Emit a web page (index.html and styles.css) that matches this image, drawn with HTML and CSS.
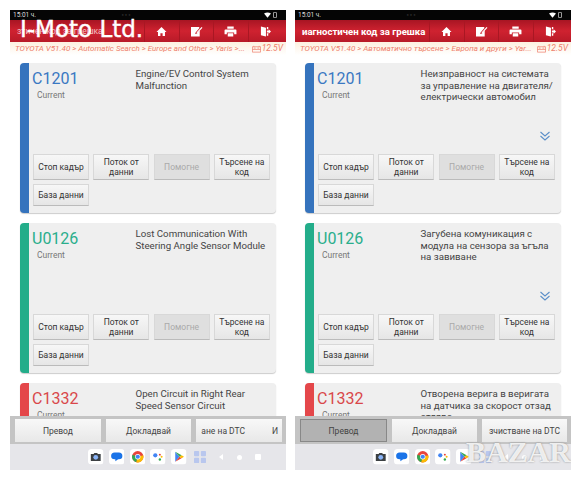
FILE: index.html
```html
<!DOCTYPE html>
<html lang="en">
<head>
  <meta charset="UTF-8">
  <title>DTC</title>
  <link rel="stylesheet" href="styles.css">
</head>
<body>

<svg class="defs" width="0" height="0">
  <symbol id="i-home" viewBox="0 0 12 12"><path d="M6 1 L11.5 6.5 H9.8 V11 H7.2 V7.8 H4.8 V11 H2.2 V6.5 H0.5 Z" fill="#fff"/></symbol>
  <symbol id="i-edit" viewBox="0 0 14 12"><path d="M1 1 H10 V2.5 L6 7 L5.5 8.8 L7.5 8.2 L10.5 5 V11.5 H1 Z" fill="#fff"/><path d="M7 7 L12.5 1 L13.5 2 L8 8 Z" fill="#fff"/></symbol>
  <symbol id="i-print" viewBox="0 0 14 12"><path d="M3.5 0.5 H10.5 V3 H3.5 Z M1.5 3.8 H12.5 Q13.5 3.8 13.5 5 V9 H11 V7 H3 V9 H0.5 V5 Q0.5 3.8 1.5 3.8 Z M4 8 H10 V11.5 H4 Z" fill="#fff"/></symbol>
  <symbol id="i-exit" viewBox="0 0 12 12"><path d="M1 0.5 L6.5 2 V11.5 L1 10 Z M7.5 1 H9 V3.5 H7.5 Z M7.5 8 H9 V10.5 H7.5 Z M7.5 5 H9.5 V3.6 L12 6 L9.5 8.4 V7 H7.5 Z" fill="#fff"/></symbol>
  <symbol id="i-chev" viewBox="0 0 12 10"><path d="M1.5 1 L6 5 L10.5 1 M1.5 5 L6 9 L10.5 5" fill="none" stroke="#5b8fc9" stroke-width="1.1"/></symbol>
  <symbol id="i-batt" viewBox="0 0 10 8"><path d="M2 0.5 V1.5 M8 0.5 V1.5 M0.5 1.5 H9.5 V7.5 H0.5 Z M0.5 4.5 H9.5 M2 3 H4 M6 3 H8" fill="none" stroke="#ee7f6c" stroke-width="0.8"/></symbol>
  <symbol id="i-wifi" viewBox="0 0 10 8"><path d="M0 2 Q5 -1.5 10 2 L5 8 Z" fill="#fff"/></symbol>
  <symbol id="i-cell" viewBox="0 0 5 8"><rect x="0.5" y="0.5" width="4" height="7" rx="0.6" fill="none" stroke="#fff" stroke-width="0.8"/></symbol>
  <symbol id="i-camera" viewBox="0 0 22 22"><rect width="22" height="22" rx="5" fill="#fff"/><path d="M4 7 H8 L9 5.5 H13 L14 7 H18 V17 H4 Z" fill="#3c4043"/><circle cx="11" cy="11.8" r="3.4" fill="#8ab4f8"/></symbol>
  <symbol id="i-msg" viewBox="0 0 22 22"><rect width="22" height="22" rx="5" fill="#fff"/><path d="M8 5 H14 Q19 5 19 10 Q19 14.5 14 14.5 H13 L9 17.5 V14.5 H8 Q3 14.5 3 10 Q3 5 8 5 Z" fill="#1a73e8"/></symbol>
  <symbol id="i-chrome" viewBox="0 0 22 22"><rect width="22" height="22" rx="5" fill="#fff"/><circle cx="11" cy="11" r="8" fill="#e8453c"/><path d="M11 11 L3.5 8 A8 8 0 0 0 9 18.8 Z" fill="#34a853"/><path d="M11 11 L19 9 A8 8 0 0 1 9 18.8 Z" fill="#fbbc04"/><circle cx="11" cy="11" r="3.8" fill="#fff"/><circle cx="11" cy="11" r="3" fill="#4285f4"/></symbol>
  <symbol id="i-assist" viewBox="0 0 22 22"><rect width="22" height="22" rx="5" fill="#fff"/><circle cx="7.5" cy="9" r="3" fill="#4285f4"/><circle cx="14" cy="8" r="1.4" fill="#ea4335"/><circle cx="16.5" cy="11" r="1.4" fill="#fbbc04"/><circle cx="14" cy="15" r="1.7" fill="#34a853"/></symbol>
  <symbol id="i-play" viewBox="0 0 22 22"><rect width="22" height="22" rx="5" fill="#fff"/><path d="M6 4 L12 11 L6 18 Z" fill="#4285f4"/><path d="M6 4 L15 9 L12 11 Z" fill="#34a853"/><path d="M6 18 L15 13 L12 11 Z" fill="#ea4335"/><path d="M15 9 L18.5 11 L15 13 L12 11 Z" fill="#fbbc04"/></symbol>
  <symbol id="i-apps" viewBox="0 0 14 14"><rect width="6" height="6" rx="1" fill="#b9c7ee"/><rect x="8" width="6" height="6" rx="1" fill="#b9c7ee"/><rect y="8" width="6" height="6" rx="1" fill="#b9c7ee"/><rect x="8" y="8" width="6" height="6" rx="1" fill="#b9c7ee"/></symbol>
</svg>

<div class="screen">
  <div class="status">
    <span>15:01 ч.</span><span class="dots">● ● ●</span>
    <span class="sys"><svg class="wifi"><use href="#i-wifi"/></svg><svg class="cell"><use href="#i-cell"/></svg></span>
  </div>
  <div class="header">
    <div class="title title-left">зтичен код за грешка</div>
    <div class="tool"><svg class="ico"><use href="#i-home"/></svg></div>
    <div class="tool"><svg class="ico"><use href="#i-edit"/></svg></div>
    <div class="tool"><svg class="ico"><use href="#i-print"/></svg></div>
    <div class="tool"><svg class="ico"><use href="#i-exit"/></svg></div>
  </div>
  <div class="crumbs">
    <span class="path">TOYOTA V51.40 &gt; Automatic Search &gt; Europe and Other &gt; Yaris &gt;...</span>
    <span class="volt"><svg class="batt"><use href="#i-batt"/></svg>12.5V</span>
  </div>
  <div class="list">
    <div class="card blue">
      <div class="card-top">
        <div class="code-box"><div class="code">C1201</div><div class="state">Current</div></div>
        <div class="desc">Engine/EV Control System Malfunction</div>
      </div>
      <div class="btns">
        <div class="btn">Стоп кадър</div>
        <div class="btn">Поток от данни</div>
        <div class="btn off">Помогне</div>
        <div class="btn">Търсене на код</div>
        <div class="btn short">База данни</div>
      </div>
    </div>
    <div class="card green">
      <div class="card-top">
        <div class="code-box"><div class="code">U0126</div><div class="state">Current</div></div>
        <div class="desc">Lost Communication With Steering Angle Sensor Module</div>
      </div>
      <div class="btns">
        <div class="btn">Стоп кадър</div>
        <div class="btn">Поток от данни</div>
        <div class="btn off">Помогне</div>
        <div class="btn">Търсене на код</div>
        <div class="btn short">База данни</div>
      </div>
    </div>
    <div class="card red">
      <div class="card-top">
        <div class="code-box"><div class="code">C1332</div><div class="state">Current</div></div>
        <div class="desc">Open Circuit in Right Rear Speed Sensor Circuit</div>
      </div>
    </div>
  </div>
  <div class="actions">
    <div class="action">Превод</div>
    <div class="action">Докладвай</div>
    <div class="action clip"><span>ане на DTC</span><span>И</span></div>
  </div>
  <div class="nav">
    <svg class="app"><use href="#i-camera"/></svg>
    <svg class="app"><use href="#i-msg"/></svg>
    <svg class="app"><use href="#i-chrome"/></svg>
    <svg class="app"><use href="#i-assist"/></svg>
    <svg class="app"><use href="#i-play"/></svg>
    <svg class="apps"><use href="#i-apps"/></svg>
    <span class="back"></span><span class="home"></span><span class="recent"></span>
  </div>
  <div class="mark-moto">I-Moto Ltd.</div>
</div>

<div class="screen">
  <div class="status">
    <span>15:01 ч.</span><span class="dots">● ● ●</span>
    <span class="sys"><svg class="wifi"><use href="#i-wifi"/></svg><svg class="cell"><use href="#i-cell"/></svg></span>
  </div>
  <div class="header">
    <div class="title">иагностичен код за грешка</div>
    <div class="tool"><svg class="ico"><use href="#i-home"/></svg></div>
    <div class="tool"><svg class="ico"><use href="#i-edit"/></svg></div>
    <div class="tool"><svg class="ico"><use href="#i-print"/></svg></div>
    <div class="tool"><svg class="ico"><use href="#i-exit"/></svg></div>
  </div>
  <div class="crumbs">
    <span class="path">TOYOTA V51.40 &gt; Автоматично търсене &gt; Европа и други &gt; Yar...</span>
    <span class="volt"><svg class="batt"><use href="#i-batt"/></svg>12.5V</span>
  </div>
  <div class="list">
    <div class="card blue">
      <div class="card-top">
        <div class="code-box"><div class="code">C1201</div><div class="state">Current</div></div>
        <div class="desc">Неизправност на системата за управление на двигателя/ електрически автомобил</div>
      </div>
      <svg class="chev"><use href="#i-chev"/></svg>
      <div class="btns">
        <div class="btn">Стоп кадър</div>
        <div class="btn">Поток от данни</div>
        <div class="btn off">Помогне</div>
        <div class="btn">Търсене на код</div>
        <div class="btn short">База данни</div>
      </div>
    </div>
    <div class="card green">
      <div class="card-top">
        <div class="code-box"><div class="code">U0126</div><div class="state">Current</div></div>
        <div class="desc">Загубена комуникация с модула на сензора за ъгъла на завиване</div>
      </div>
      <svg class="chev"><use href="#i-chev"/></svg>
      <div class="btns">
        <div class="btn">Стоп кадър</div>
        <div class="btn">Поток от данни</div>
        <div class="btn off">Помогне</div>
        <div class="btn">Търсене на код</div>
        <div class="btn short">База данни</div>
      </div>
    </div>
    <div class="card red">
      <div class="card-top">
        <div class="code-box"><div class="code">C1332</div><div class="state">Current</div></div>
        <div class="desc">Отворена верига в веригата на датчика за скорост отзад отляво</div>
      </div>
    </div>
  </div>
  <div class="actions">
    <div class="action pressed">Превод</div>
    <div class="action">Докладвай</div>
    <div class="action">зчистване на DTC</div>
  </div>
  <div class="nav">
    <svg class="app"><use href="#i-camera"/></svg>
    <svg class="app"><use href="#i-msg"/></svg>
    <svg class="app"><use href="#i-chrome"/></svg>
    <svg class="app"><use href="#i-assist"/></svg>
    <svg class="app"><use href="#i-play"/></svg>
    <svg class="apps"><use href="#i-apps"/></svg>
    <span class="back"></span><span class="home"></span><span class="recent"></span>
  </div>
  <div class="mark-bazar">BAZAR</div>
</div>

</body>
</html>
```

FILE: styles.css
```css
body {
  font-family: Roboto, "Liberation Sans", sans-serif;
  margin: 0;
  padding: 10px 0 0 10px;
  display: flex;
  gap: 9px;
  background-color: #fff;
  overflow: hidden;
  height: 470px;
  box-sizing: border-box;
}

.defs {
  position: absolute;
}

.screen {
  position: relative;
  width: 276px;
  height: 460px;
  display: flex;
  flex-direction: column;
  overflow: hidden;
  background-color: #fff;
}

.status {
  height: 10px;
  background-color: #050505;
  color: #ddd;
  font-size: 6.5px;
  line-height: 10px;
  display: flex;
  justify-content: space-between;
  padding: 0 9px 0 3px;
  flex-shrink: 0;
}

.dots {
  color: #2c2c2c;
  font-size: 4px;
  margin-right: 48px;
}

.sys {
  display: flex;
  align-items: center;
  gap: 2px;
}

.wifi {
  width: 7px;
  height: 6px;
}

.cell {
  width: 4px;
  height: 6px;
}

.header {
  height: 22px;
  flex-shrink: 0;
  display: flex;
  align-items: center;
  background: linear-gradient(#a81523, #cf2230 50%, #b81a28);
  color: #fff;
  padding-right: 4px;
}

.title {
  width: 134px;
  padding-left: 7px;
  box-sizing: border-box;
  font-size: 9.6px;
  font-weight: 700;
  white-space: nowrap;
  overflow: hidden;
}

.title-left {
  font-size: 8.5px;
  font-weight: 400;
  color: #f0c0c4;
}

.tool {
  width: 34.5px;
  height: 21px;
  border-left: 1px solid #a91723;
  box-sizing: border-box;
  display: flex;
  align-items: center;
  justify-content: center;
}

.ico {
  width: 13px;
  height: 11px;
}

.crumbs {
  height: 13px;
  flex-shrink: 0;
  background: linear-gradient(#fdf1e0, #fff);
  color: #ee7f6c;
  font-size: 8px;
  font-style: italic;
  line-height: 13px;
  display: flex;
  justify-content: space-between;
  padding: 0 3px 0 5px;
  white-space: nowrap;
}

.volt {
  font-size: 8.5px;
  display: flex;
  align-items: center;
  gap: 1px;
}

.batt {
  width: 9px;
  height: 8px;
}

.list {
  flex: 1;
  min-height: 0;
  overflow: hidden;
  padding: 8px 10px 0 10px;
  display: flex;
  flex-direction: column;
  gap: 10px;
}

.card {
  height: 150px;
  flex-shrink: 0;
  box-sizing: border-box;
  background-color: #efefef;
  border-radius: 4px;
  border-left: 9px solid;
  padding: 4px 5px 7px 3px;
  display: flex;
  flex-direction: column;
  box-shadow: 0 1px 1px #ccc;
}

.blue { border-left-color: #3573bd; }
.green { border-left-color: #23ad8a; }
.red { border-left-color: #e4474a; }

.blue .code { color: #3a78c2; }
.green .code { color: #2aae8c; }
.red .code { color: #d9474a; }

.card-top {
  display: flex;
}

.code-box {
  width: 103.5px;
  flex-shrink: 0;
}

.code {
  font-size: 16px;
  line-height: 19px;
  margin-top: 2px;
}

.state {
  font-size: 8.5px;
  color: #777;
  margin: 2px 0 0 5px;
}

.desc {
  font-size: 9.7px;
  line-height: 11.5px;
  color: #444;
  padding: 1px 1px 0 0;
}

.chev {
  width: 12px;
  height: 10px;
  align-self: flex-end;
  margin: 28px 5px 0 0;
}

.btns {
  margin-top: auto;
  display: grid;
  grid-template-columns: repeat(4, 56px);
  column-gap: 4.3px;
  row-gap: 4px;
  padding-left: 1px;
}

.btn {
  height: 26px;
  background: linear-gradient(#f7f7f7, #e6e6e6);
  border: 1px solid #d8d8d8;
  border-bottom-color: #bbb;
  box-sizing: border-box;
  color: #333;
  font-size: 8.5px;
  line-height: 10px;
  text-align: center;
  display: flex;
  align-items: center;
  justify-content: center;
}

.short {
  height: 22px;
}

.off {
  background: #dfdfdf;
  color: #aaa;
}

.actions {
  position: absolute;
  left: 0;
  right: 0;
  bottom: 26px;
  height: 28px;
  background-color: #c4c4c4;
  box-sizing: border-box;
  padding: 3px 4px 2px 5px;
  display: flex;
  gap: 5px;
}

.action {
  flex: 1 1 0;
  min-width: 0;
  box-sizing: border-box;
  background: linear-gradient(#f8f8f8, #e8e8e8);
  color: #444;
  font-size: 8.5px;
  display: flex;
  align-items: center;
  justify-content: center;
  white-space: nowrap;
}

.clip {
  justify-content: space-between;
}

.clip span {
  margin: 0 4px 0 5px;
}

.pressed {
  background: #b2b2b2;
  border: 1px solid #888;
}

.nav {
  height: 26px;
  flex-shrink: 0;
  background-color: #e6e6ea;
  display: flex;
  align-items: center;
  padding-left: 78px;
}

.app {
  width: 15.5px;
  height: 15.5px;
  margin-right: 5.3px;
}

.apps {
  width: 12px;
  height: 12px;
  margin: 0 13px 0 2px;
}

.back {
  width: 0;
  height: 0;
  border-top: 3px solid transparent;
  border-bottom: 3px solid transparent;
  border-right: 4px solid #fff;
  margin-right: 14px;
}

.home {
  width: 5px;
  height: 5px;
  border-radius: 50%;
  background-color: #fff;
  margin-right: 13px;
}

.recent {
  width: 6px;
  height: 6px;
  border-radius: 1px;
  background-color: #fff;
}

.mark-moto {
  position: absolute;
  left: 10px;
  top: 6px;
  font-family: "DejaVu Sans", sans-serif;
  font-size: 23px;
  line-height: 26px;
  color: #fff;
  white-space: nowrap;
  -webkit-text-stroke: 0.4px #fff;
}

.mark-bazar {
  position: absolute;
  right: 0;
  bottom: 0;
  font-family: "Liberation Serif", serif;
  font-weight: 700;
  font-size: 30px;
  line-height: 36px;
  color: rgba(255, 255, 255, 0.85);
  text-shadow: 0 0 2px #888;
}
```
